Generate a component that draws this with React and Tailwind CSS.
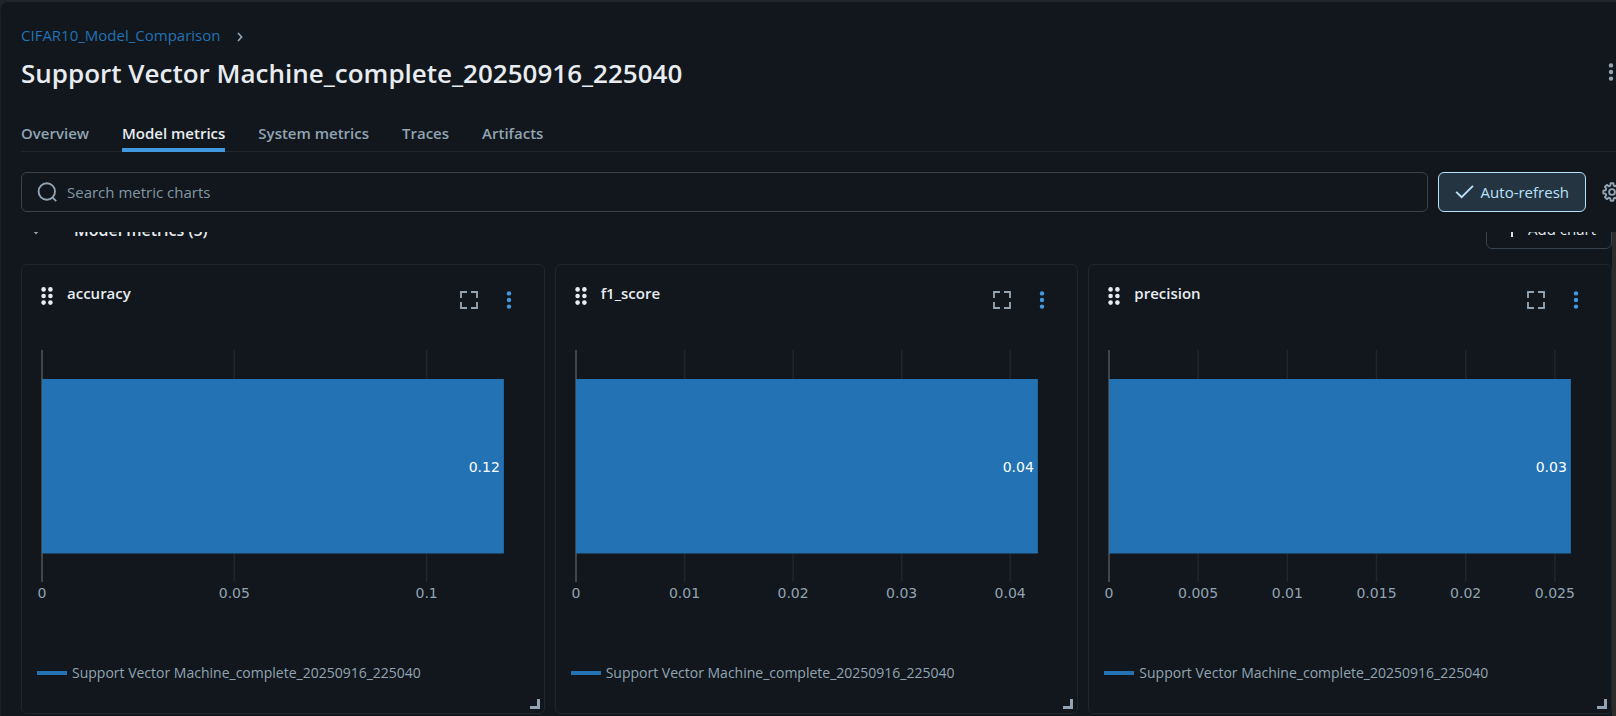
const RUN = "Support Vector Machine_complete_20250916_225040";

const TABS = ["Overview", "Model metrics", "System metrics", "Traces", "Artifacts"];

// Each tick is [label, percentage of the plot width measured from the zero axis].
const CHARTS = [
  {
    name: "accuracy",
    label: "0.12",
    ticks: [["0", 0], ["0.05", 39.6], ["0.1", 79.2]],
  },
  {
    name: "f1_score",
    label: "0.04",
    ticks: [["0", 0], ["0.01", 22.35], ["0.02", 44.7], ["0.03", 67.05], ["0.04", 89.4]],
  },
  {
    name: "precision",
    label: "0.03",
    ticks: [["0", 0], ["0.005", 18.36], ["0.01", 36.72], ["0.015", 55.08], ["0.02", 73.44], ["0.025", 91.8]],
  },
];

// Outline of an eight-toothed wheel centred in a 20 by 20 box.
const GEAR_OUTLINE = Array.from({ length: 8 }, (_, i) =>
  [[-15, 6.6], [-9, 8.8], [9, 8.8], [15, 6.6]]
    .map(([offset, radius]) => {
      const angle = ((i * 45 + offset) * Math.PI) / 180;
      return `${(10 + radius * Math.cos(angle)).toFixed(2)},${(10 + radius * Math.sin(angle)).toFixed(2)}`;
    })
    .join(" ")
).join(" ");

function Kebab({ className }) {
  return (
    <svg viewBox="0 0 20 20" className={className} fill="currentColor" aria-hidden="true">
      <circle cx="10" cy="3.4" r="2.2" />
      <circle cx="10" cy="10" r="2.2" />
      <circle cx="10" cy="16.6" r="2.2" />
    </svg>
  );
}

function DragHandle() {
  return (
    <svg viewBox="0 0 20 20" className="size-5 shrink-0 text-[#e8ecf0]" fill="currentColor" aria-hidden="true">
      {[3.4, 10, 16.6].map((y) => (
        <g key={y}>
          <circle cx="6.6" cy={y} r="2.3" />
          <circle cx="13.4" cy={y} r="2.3" />
        </g>
      ))}
    </svg>
  );
}

function Fullscreen() {
  return (
    <svg viewBox="0 0 20 20" className="size-5" fill="none" stroke="currentColor" strokeWidth="1.9" aria-hidden="true">
      <path d="M2 8V2h6M12 2h6v6M18 12v6h-6M8 18H2v-6" />
    </svg>
  );
}

function Gear() {
  return (
    <svg viewBox="0 0 20 20" className="size-5 shrink-0" fill="none" stroke="currentColor" strokeWidth="1.9" strokeLinejoin="round" aria-hidden="true">
      <polygon points={GEAR_OUTLINE} />
      <circle cx="10" cy="10" r="2.9" />
    </svg>
  );
}

function BarChart({ chart }) {
  return (
    <svg
      className="mt-[39px] block h-64 w-full overflow-visible font-['DejaVu_Sans',sans-serif] text-sm"
      role="img"
      aria-label={chart.name}
    >
      {chart.ticks.slice(1).map(([text, at]) => (
        <line key={text} x1={`${at}%`} x2={`${at}%`} y1="0" y2="232" stroke="#1f262e" strokeWidth="1.5" />
      ))}
      <line x1="0" x2="0" y1="0" y2="232" stroke="#444444" strokeWidth="2" />
      <rect x="0" y="29" width="95.1%" height="174.5" fill="#2272b4" />
      <text x="95.1%" dx="-4" y="122" textAnchor="end" fill="#ffffff">
        {chart.label}
      </text>
      {chart.ticks.map(([text, at]) => (
        <text key={text} x={`${at}%`} y="248" textAnchor="middle" fill="#92a4b3">
          {text}
        </text>
      ))}
    </svg>
  );
}

function MetricCard({ chart }) {
  return (
    <section className="relative flex h-[450px] flex-col rounded-md border border-[#1f272d] pt-[18px] pr-4 pl-5">
      <header className="flex h-7 items-start">
        <div className="-ml-[5px] flex grow items-start gap-2.5">
          <span className="pt-[3px]">
            <DragHandle />
          </span>
          <h3 className="text-[15px] leading-5 font-semibold text-[#e8ecf0]">{chart.name}</h3>
        </div>
        <div className="flex items-center gap-5 pt-[7px] pr-[9px]">
          <button type="button" aria-label="Full screen" className="text-[#92a4b3]">
            <Fullscreen />
          </button>
          <button type="button" aria-label="Chart menu" className="text-[#4299e0]">
            <Kebab className="size-5" />
          </button>
        </div>
      </header>
      <BarChart chart={chart} />
      <div className="mt-[57px] -ml-[5px] flex items-center gap-[5px] text-sm leading-5 text-[#92a4b3]">
        <span className="h-1 w-[30px] bg-[#2272b4]" />
        {RUN}
      </div>
      <svg viewBox="0 0 10 10" className="absolute right-1 bottom-1 size-2.5" aria-hidden="true">
        <path d="M0 8.5h8.5V0" fill="none" stroke="#92a4b3" strokeWidth="3" />
      </svg>
    </section>
  );
}

export default function App() {
  return (
    <div className="h-screen overflow-hidden bg-[#1f242c] pt-0.5 font-['Open_Sans','Noto_Sans',sans-serif] text-base text-[#e8ecf0]">
      <main className="flex h-full flex-col overflow-hidden rounded-tl-lg border-l border-[#1b2027] bg-[#11171c] pl-5">
        <nav aria-label="Breadcrumb" className="mt-[23px] flex h-5 shrink-0 items-center gap-4">
          <a href="#experiment" className="text-[15px] leading-5 text-[#2272b4]">CIFAR10_Model_Comparison</a>
          <svg viewBox="0 0 8 10" className="mt-1 h-2.5 w-2" fill="none" stroke="#92a4b3" strokeWidth="1.7" aria-hidden="true">
            <path d="M2 1l3.6 4L2 9" />
          </svg>
        </nav>
        <div className="mt-2 flex h-10 shrink-0 items-start justify-between">
          <h1 className="text-[26px] leading-10 font-semibold">{RUN}</h1>
          <button type="button" aria-label="Run menu" className="mt-[9px] -mr-[5px] text-[#92a4b3]">
            <Kebab className="size-5" />
          </button>
        </div>
        <div role="tablist" className="mt-7 flex h-[31px] shrink-0 gap-[33px] border-b border-[#1f272d]">
          {TABS.map((tab) => (
            <button
              key={tab}
              type="button"
              role="tab"
              aria-selected={tab === "Model metrics"}
              className={
                tab === "Model metrics"
                  ? "-mb-px border-b-4 border-[#4299e0] pb-[3px] text-[15px] leading-5 font-semibold"
                  : "-mb-px border-b-4 border-transparent pb-[3px] text-[15px] leading-5 font-semibold text-[#92a4b3]"
              }
            >
              {tab}
            </button>
          ))}
        </div>
        <div className="mt-5 flex h-10 shrink-0 items-center gap-2.5">
          <label className="flex h-10 grow items-center gap-2.5 rounded-md border border-[#37444f] px-[15px] text-[#92a4b3]">
            <svg viewBox="0 0 20 20" className="size-5" fill="none" stroke="currentColor" strokeWidth="1.9" aria-hidden="true">
              <circle cx="9.8" cy="9.5" r="8.2" />
              <path d="M15.4 15.4l3.8 3.8" />
            </svg>
            <input
              type="text"
              aria-label="Search metric charts"
              placeholder="Search metric charts"
              className="grow bg-transparent text-[15px] leading-5 outline-none placeholder:text-[#8396a5]"
            />
          </label>
          <button
            type="button"
            aria-pressed="true"
            className="flex h-10 shrink-0 items-center gap-1.5 rounded-md border border-[#bae1fc] bg-[#243440] px-4 text-[15px] leading-5 text-[#bae1fc]"
          >
            <svg viewBox="0 0 20 20" className="size-5" fill="none" stroke="currentColor" strokeWidth="1.9" aria-hidden="true">
              <path d="M1.2 9.8l5.4 5.4L18 3.8" />
            </svg>
            Auto-refresh
          </button>
          <button type="button" aria-label="Configure charts" className="-mr-1.5 ml-1.5 shrink-0 text-[#92a4b3]">
            <Gear />
          </button>
        </div>
        <div className="mt-5 flex min-h-0 grow overflow-hidden">
          <div className="min-w-0 grow">
            <div className="-mt-[23px] flex h-10 items-center justify-between">
              <h2 className="flex items-center pt-0.5 text-base leading-5 font-semibold">
                <svg viewBox="0 0 20 20" className="mt-0.5 mr-7 ml-[5px] size-5 text-[#92a4b3]" fill="currentColor" aria-hidden="true">
                  <path d="M5 8h10l-5 5.4z" />
                </svg>
                Model metrics (5)
              </h2>
              <button
                type="button"
                className="flex h-10 items-center gap-1.5 rounded-md border border-[#37444f] px-[15px] text-[15px] leading-5"
              >
                <svg viewBox="0 0 20 20" className="size-5" fill="none" stroke="currentColor" strokeWidth="1.9" aria-hidden="true">
                  <path d="M10 2v16M2 10h16" />
                </svg>
                Add chart
              </button>
            </div>
            <div className="mt-[15px] grid grid-cols-3 gap-2.5">
              {CHARTS.map((chart) => (
                <MetricCard key={chart.name} chart={chart} />
              ))}
            </div>
          </div>
          <div className="w-1 shrink-0 bg-[#2c2c2c]" />
        </div>
      </main>
    </div>
  );
}
